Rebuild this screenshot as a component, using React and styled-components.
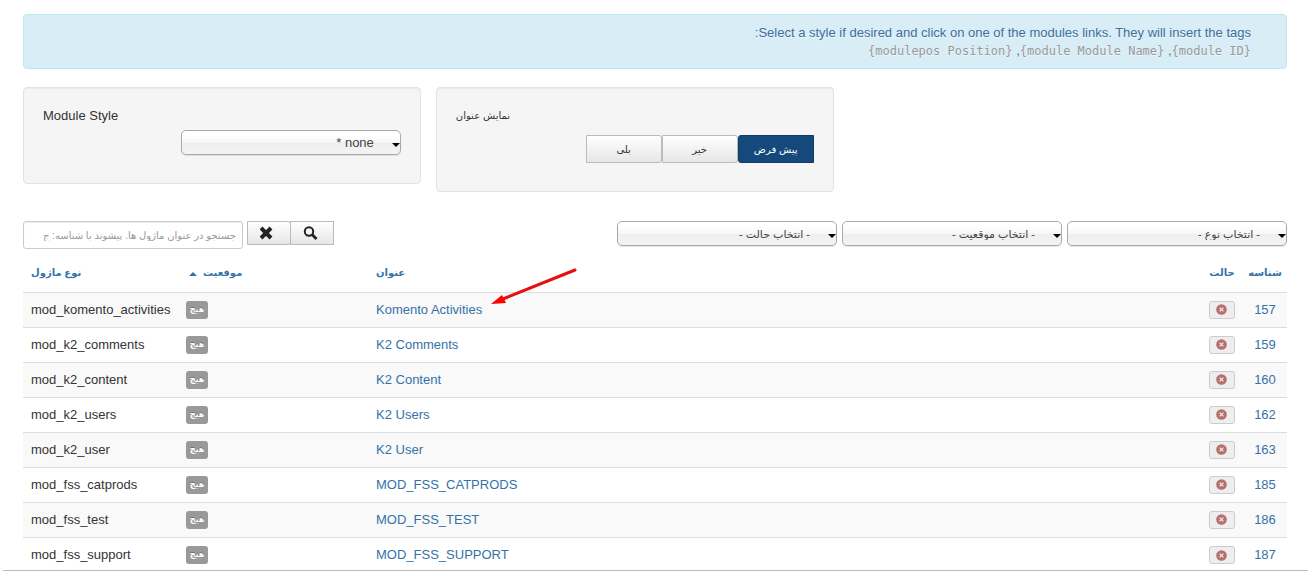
import React from 'react'
import styled, { createGlobalStyle } from 'styled-components'

const GlobalStyle = createGlobalStyle`
  * {
    box-sizing: border-box;
  }
  body {
    margin: 0;
    background: #fff;
    color: #333;
    font-family: 'Liberation Sans', 'DejaVu Sans', sans-serif;
    font-size: 13px;
    line-height: 18px;
  }
`

const Pane = styled.main`
  height: calc(100vh - 10px);
  margin-left: 3px;
  padding: 14px 21px 0 20px;
  border-bottom: 1px solid #bbb;
  overflow: hidden;
`

const Alert = styled.div`
  padding: 9px 35px 8px 14px;
  border: 1px solid #bce8f1;
  border-radius: 4px;
  background: #d9edf7;
  color: #3a6f9a;
  text-shadow: 0 1px 0 rgba(255, 255, 255, 0.5);
`

const Tag = styled.code`
  direction: ltr;
  unicode-bidi: isolate;
  color: #999;
  font-family: 'DejaVu Sans Mono', monospace;
  font-size: 12px;
`

const Panels = styled.section`
  display: flex;
  align-items: flex-start;
  gap: 15px;
  margin-top: 18px;
`

const Panel = styled.div`
  flex: 0 0 auto;
  width: calc(31% + 6px);
  padding: 19px 19px 18px;
  border: 1px solid #e3e3e3;
  border-radius: 4px;
  background: #f5f5f5;
  box-shadow: inset 0 1px 1px rgba(0, 0, 0, 0.05);
`

const PanelLabel = styled.label`
  display: block;
  font-size: ${props => (props.$persian ? '10px' : '13px')};
`

const Controls = styled.div`
  display: flex;
  justify-content: flex-end;
  padding: ${props => (props.$tall ? '10px 0' : '5px 0 10px')};
`

const SelectBox = styled.div`
  position: relative;
  width: 220px;

  &::after {
    content: '';
    position: absolute;
    top: 13px;
    right: 1px;
    border: 4px solid transparent;
    border-top-color: #000;
    border-bottom: 0;
    pointer-events: none;
  }
`

const Select = styled.select`
  display: block;
  width: 100%;
  height: 25px;
  padding: 0 26px 0 8px;
  appearance: none;
  direction: rtl;
  border: 1px solid #aaa;
  border-radius: 5px;
  background: linear-gradient(#fff 20%, #f6f6f6 50%, #eee 52%, #f4f4f4 100%);
  box-shadow: 0 1px 1px rgba(0, 0, 0, 0.1);
  color: #444;
  font-family: inherit;
  font-size: ${props => (props.$persian ? '11px' : '13px')};
`

const ButtonGroup = styled.div`
  display: flex;

  > * + * {
    margin-left: ${props => (props.$joined ? '-1px' : '0')};
  }
`

const Button = styled.button`
  display: flex;
  align-items: center;
  justify-content: center;
  width: ${props => (props.$icon ? '44px' : '76px')};
  height: ${props => (props.$icon ? '24px' : '28px')};
  padding: 0;
  border: 1px solid ${props => (props.$active ? '#123c66' : '#bbb')};
  border-radius: 0 3px 3px 0;
  background: ${props => (props.$active ? '#15497c' : 'linear-gradient(#fff, #e6e6e6)')};
  color: ${props => (props.$active ? '#fff' : '#333')};
  font-family: inherit;
  font-size: 10px;

  &:last-child {
    border-radius: ${props => (props.$active ? '3px 0 0 3px' : '0')};
  }
`

const Toolbar = styled.section`
  display: flex;
  align-items: flex-start;
  gap: 4px;
  margin-top: 29px;
`

const Search = styled.input`
  width: 220px;
  height: 28px;
  padding: 4px 6px;
  direction: rtl;
  border: 1px solid #ccc;
  border-radius: 3px;
  box-shadow: inset 0 1px 1px rgba(0, 0, 0, 0.08);
  color: #555;
  font-family: inherit;
  font-size: 10px;

  &::placeholder {
    color: #999;
  }
`

const Filters = styled.div`
  display: flex;
  gap: 5px;
  margin-left: auto;
`

const Table = styled.table`
  width: 100%;
  margin-top: 6px;
  border-collapse: collapse;
  table-layout: fixed;
`

const HeadCell = styled.th`
  width: ${props => props.$width || 'auto'};
  height: 37px;
  padding: 0 ${props => (props.$center ? '0' : '8px')};
  text-align: ${props => (props.$center ? 'center' : 'left')};
  font-size: 10px;
  white-space: nowrap;
`

const Row = styled.tr`
  border-top: 1px solid #ddd;

  &:nth-child(odd) {
    background: #f9f9f9;
  }
`

const Cell = styled.td`
  height: 35px;
  padding: 0 ${props => (props.$center ? '0' : '8px')};
  text-align: ${props => (props.$center ? 'center' : 'left')};
  white-space: nowrap;
`

const Link = styled.a`
  position: relative;
  color: #3572a8;
  text-decoration: none;
`

const SortMark = styled.span`
  display: inline-block;
  margin: 0 6px 0 3px;
  border: 4px solid transparent;
  border-bottom-color: #3572a8;
  border-top: 0;
  vertical-align: middle;
`

const Badge = styled.span`
  display: inline-block;
  width: 22px;
  height: 18px;
  border-radius: 3px;
  background: #999;
  color: #fff;
  font-size: 8px;
  font-weight: bold;
  text-align: center;
  text-shadow: 0 -1px 0 rgba(0, 0, 0, 0.25);
  vertical-align: middle;
`

const StatusButton = styled.button`
  display: inline-flex;
  align-items: center;
  justify-content: center;
  width: 26px;
  height: 18px;
  padding: 0 2px 0 0;
  border: 1px solid #ccc;
  border-radius: 3px;
  background: #eee;
  vertical-align: middle;
`

const Pointer = styled.svg`
  position: absolute;
  left: calc(100% + 9px);
  bottom: 11px;
  pointer-events: none;
`

const modules = [
  { id: 157, title: 'Komento Activities', type: 'mod_komento_activities', pointed: true },
  { id: 159, title: 'K2 Comments', type: 'mod_k2_comments' },
  { id: 160, title: 'K2 Content', type: 'mod_k2_content' },
  { id: 162, title: 'K2 Users', type: 'mod_k2_users' },
  { id: 163, title: 'K2 User', type: 'mod_k2_user' },
  { id: 185, title: 'MOD_FSS_CATPRODS', type: 'mod_fss_catprods' },
  { id: 186, title: 'MOD_FSS_TEST', type: 'mod_fss_test' },
  { id: 187, title: 'MOD_FSS_SUPPORT', type: 'mod_fss_support' },
]

const filters = ['- انتخاب حالت -', '- انتخاب موقعیت -', '- انتخاب نوع -']

const ClearIcon = () => (
  <svg width="18" height="14" viewBox="0 0 18 14" aria-hidden="true">
    <path d="M1 2l10 10M11 2L1 12" stroke="#222" strokeWidth="4" />
  </svg>
)

const SearchIcon = () => (
  <svg width="18" height="14" viewBox="0 0 18 14" fill="none" stroke="#222" aria-hidden="true">
    <circle cx="6" cy="5.5" r="4.2" strokeWidth="2" />
    <path d="M9.3 8.8l4.2 4.2" strokeWidth="2.8" />
  </svg>
)

const UnpublishedIcon = () => (
  <svg width="11" height="11" viewBox="0 0 11 11" aria-hidden="true">
    <circle cx="5.5" cy="5.5" r="5.3" fill="#b5706e" />
    <path d="M3.6 3.6l3.8 3.8M7.4 3.6L3.6 7.4" stroke="#f3e6e6" strokeWidth="1.3" />
  </svg>
)

const Arrow = () => (
  <Pointer width="86" height="38" viewBox="0 0 86 38" aria-hidden="true">
    <path d="M12 31L84 2" stroke="#e60f0f" strokeWidth="3" strokeLinecap="round" />
    <path d="M0 36L11 27L15 35Z" fill="#f00" />
  </Pointer>
)

const App = () => (
  <>
    <GlobalStyle />
    <Pane>
      <Alert dir="rtl">
        Select a style if desired and click on one of the modules links. They will insert the tags:
        <br />
        <Tag>{'{module ID}'}</Tag>, <Tag>{'{module Module Name}'}</Tag>, <Tag>{'{modulepos Position}'}</Tag>
      </Alert>

      <Panels>
        <Panel>
          <PanelLabel htmlFor="style">Module Style</PanelLabel>
          <Controls>
            <SelectBox>
              <Select id="style">
                <option>none *</option>
              </Select>
            </SelectBox>
          </Controls>
        </Panel>
        <Panel>
          <PanelLabel as="div" id="show-title" $persian>
            نمایش عنوان
          </PanelLabel>
          <Controls $tall>
            <ButtonGroup role="group" aria-labelledby="show-title">
              <Button type="button">بلی</Button>
              <Button type="button">خیر</Button>
              <Button type="button" $active aria-pressed="true">
                پیش فرض
              </Button>
            </ButtonGroup>
          </Controls>
        </Panel>
      </Panels>

      <Toolbar>
        <Search type="text" aria-label="جستجو" placeholder="جستجو در عنوان ماژول ها. پیشوند با شناسه: ج" />
        <ButtonGroup $joined>
          <Button type="button" $icon aria-label="پاک کردن">
            <ClearIcon />
          </Button>
          <Button type="button" $icon aria-label="جستجو">
            <SearchIcon />
          </Button>
        </ButtonGroup>
        <Filters>
          {filters.map(label => (
            <SelectBox key={label}>
              <Select $persian aria-label={label}>
                <option>{label}</option>
              </Select>
            </SelectBox>
          ))}
        </Filters>
      </Toolbar>

      <Table>
        <thead>
          <tr>
            <HeadCell $width="155px">
              <Link href="#type">نوع ماژول</Link>
            </HeadCell>
            <HeadCell $width="190px">
              <Link href="#position">
                <SortMark />
                موقعیت
              </Link>
            </HeadCell>
            <HeadCell>
              <Link href="#title">عنوان</Link>
            </HeadCell>
            <HeadCell $width="42px" $center>
              <Link href="#status">حالت</Link>
            </HeadCell>
            <HeadCell $width="44px" $center>
              <Link href="#id">شناسه</Link>
            </HeadCell>
          </tr>
        </thead>
        <tbody>
          {modules.map(({ id, title, type, pointed }) => (
            <Row key={id}>
              <Cell>{type}</Cell>
              <Cell>
                <Badge>هیچ</Badge>
              </Cell>
              <Cell>
                <Link href={`#module-${id}`}>
                  {title}
                  {pointed && <Arrow />}
                </Link>
              </Cell>
              <Cell $center>
                <StatusButton type="button" aria-label="حالت">
                  <UnpublishedIcon />
                </StatusButton>
              </Cell>
              <Cell $center>
                <Link href={`#module-${id}`}>{id}</Link>
              </Cell>
            </Row>
          ))}
        </tbody>
      </Table>
    </Pane>
  </>
)

export default App
